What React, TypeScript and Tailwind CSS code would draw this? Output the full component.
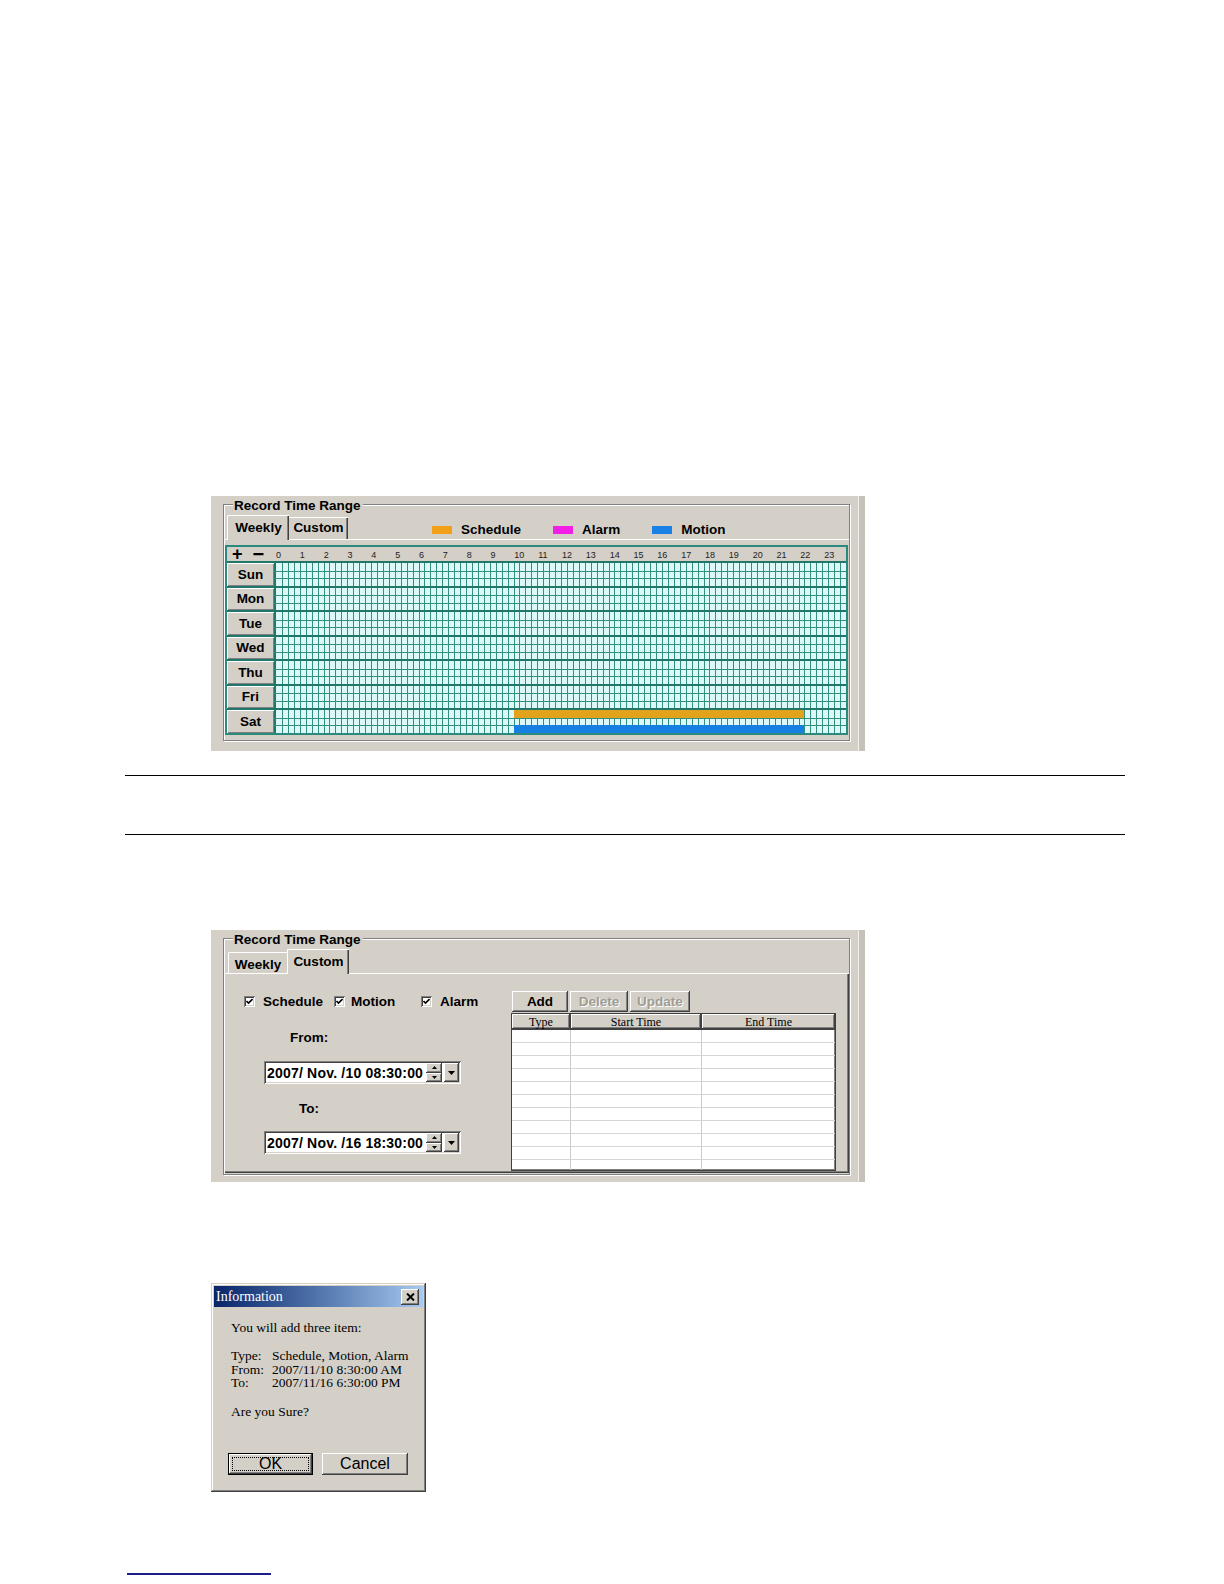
import React from 'react';

const ui = "font-['Liberation_Sans',Arial,sans-serif]";
const serif = "font-['Liberation_Serif','Times_New_Roman',serif]";
const raised = 'shadow-[inset_-1px_-1px_0_#404040,inset_1px_1px_0_#ffffff,inset_-2px_-2px_0_#808080]';
const sunken =
  'shadow-[inset_1px_1px_0_#808080,inset_-1px_-1px_0_#ffffff,inset_2px_2px_0_#404040,inset_-2px_-2px_0_#d4d0c8]';

const DAYS = ['Sun', 'Mon', 'Tue', 'Wed', 'Thu', 'Fri', 'Sat'];
const HOURS = Array.from({ length: 24 }, (_, i) => i);

// Sat row: schedule + motion from 10:00 to 22:15 (15 min cells)
const BARS = [
  { day: 6, sub: 0, from: 40, to: 89, color: '#e2a21c' },
  { day: 6, sub: 2, from: 40, to: 89, color: '#1580e2' },
];

function GroupBox({ children }: { children: React.ReactNode }) {
  return (
    <div className="relative w-[627px] h-[237px] border border-[#808080] shadow-[inset_1px_1px_0_#ffffff,1px_1px_0_#ffffff]">
      <span className="absolute left-[9px] top-[-7px] bg-[#d4d0c8] pl-px pr-[2px] text-[13.5px] font-bold leading-[15px]">
        Record Time Range
      </span>
      {children}
    </div>
  );
}

function Cells() {
  const W = 572;
  const H = 172;
  const rowH = H / 7;
  const subH = (rowH - 2) / 3;
  const cw = (W - 2) / 96;
  const parts: React.ReactNode[] = [];

  for (let i = 1; i < 96; i++) {
    const x = Math.round(2 + i * cw);
    parts.push(<rect key={'v' + i} x={x} y={0} width={1} height={H} fill="#33907f" />);
  }
  for (let d = 0; d < 7; d++) {
    const top = d * rowH;
    parts.push(<rect key={'d' + d} x={0} y={Math.round(top)} width={W} height={2} fill="#21766a" />);
    for (let k = 1; k < 3; k++) {
      parts.push(
        <rect key={'h' + d + k} x={0} y={Math.round(top + 2 + k * subH)} width={W} height={1} fill="#33907f" />,
      );
    }
  }
  BARS.forEach((b, i) => {
    const top = b.day * rowH + 2 + b.sub * subH;
    parts.push(
      <rect key={'b' + i} x={2 + b.from * cw} y={top} width={(b.to - b.from) * cw} height={subH + 0.5} fill={b.color} />,
    );
  });

  return (
    <svg width={W} height={H} shapeRendering="crispEdges" className="block">
      <rect x={0} y={0} width={W} height={H} fill="#dcf9f7" />
      <rect x={0} y={0} width={2} height={H} fill="#21766a" />
      {parts}
    </svg>
  );
}

function WeekGrid() {
  return (
    <div className="ml-[1px] mt-[5px] w-[623px] h-[190px] border-2 border-[#2a8a7e] flex flex-col">
      <div className="flex h-[14px] bg-[#d4d0c8]">
        <div className="w-[47px] flex items-center pl-[5px] font-bold leading-none">
          <span className="text-[18px]">+</span>
          <span className="ml-[10px] text-[20px]">−</span>
        </div>
        <div className="flex-1 grid grid-cols-[repeat(24,minmax(0,1fr))] items-end pb-[1px]">
          {HOURS.map((h) => (
            <span key={h} className="pl-[2px] text-[9px] leading-none text-[#222]">
              {h}
            </span>
          ))}
        </div>
      </div>
      <div className="flex h-[172px]">
        <div className="w-[47px] flex flex-col">
          {DAYS.map((d) => (
            <div
              key={d}
              className="flex-1 border-t-2 border-[#21766a] bg-[#d4d0c8] shadow-[inset_1px_1px_0_#ffffff,inset_-1px_-1px_0_#808080] flex items-center justify-center text-[13.5px] font-bold leading-none"
            >
              {d}
            </div>
          ))}
        </div>
        <Cells />
      </div>
    </div>
  );
}

function Legend() {
  const items = [
    { label: 'Schedule', color: 'bg-[#f2a01a]' },
    { label: 'Alarm', color: 'bg-[#f21ee6]' },
    { label: 'Motion', color: 'bg-[#1a80e6]' },
  ];
  return (
    <div className="self-start mt-[19px] ml-[84px] flex items-center gap-[32px]">
      {items.map((it) => (
        <div key={it.label} className="flex items-center gap-[9px]">
          <span className={`w-[20px] h-[8px] ${it.color}`} />
          <span className="text-[13.5px] font-bold leading-[12px]">{it.label}</span>
        </div>
      ))}
    </div>
  );
}

function WeeklyShot() {
  return (
    <div className="ml-[211px] w-[654px] h-[255px] bg-[#d4d0c8] pl-[12px] pt-[8px] shadow-[inset_-6px_0_0_#c6c2ba,inset_-7px_0_0_#f2f0ec]">
      <GroupBox>
        <div className="flex items-end h-[35px] pl-[3px] border-b border-white">
          <div className="mb-[-1px] h-[25px] w-[62px] bg-[#d4d0c8] border-l border-t border-white rounded-tl-[2px] shadow-[inset_-1px_0_0_#404040,inset_-2px_0_0_#808080] flex justify-center pt-[4px] text-[13.5px] font-bold leading-[15px]">
            Weekly
          </div>
          <div className="h-[22px] w-[59px] border-t border-white shadow-[inset_-1px_0_0_#404040,inset_-2px_0_0_#808080] flex justify-center pt-[2px] text-[13.5px] font-bold leading-[15px]">
            Custom
          </div>
          <Legend />
        </div>
        <WeekGrid />
      </GroupBox>
    </div>
  );
}

function Check() {
  return (
    <span className={`w-[11px] h-[11px] bg-white ${sunken} flex items-center justify-center`}>
      <svg width="7" height="7" viewBox="0 0 7 7">
        <path d="M0.5 3 L2.5 5 L6.5 1" stroke="#000" strokeWidth="1.6" fill="none" />
      </svg>
    </span>
  );
}

function DateField({ value, className }: { value: string; className: string }) {
  return (
    <div className={`ml-[39px] w-[197px] h-[23px] bg-white ${sunken} flex items-center pl-[3px] ${className}`}>
      <span className="w-[157px] text-[14px] font-bold leading-none tracking-[0.2px] whitespace-nowrap">{value}</span>
      <div className="ml-[2px] w-[16px] h-[19px] flex flex-col">
        <div className={`flex-1 bg-[#d4d0c8] ${raised} flex items-center justify-center`}>
          <svg width="5" height="3">
            <path d="M0 3 L2.5 0 L5 3Z" fill="#000" />
          </svg>
        </div>
        <div className={`flex-1 bg-[#d4d0c8] ${raised} flex items-center justify-center`}>
          <svg width="5" height="3">
            <path d="M0 0 L2.5 3 L5 0Z" fill="#000" />
          </svg>
        </div>
      </div>
      <div className={`ml-[2px] w-[15px] h-[19px] bg-[#d4d0c8] ${raised} flex items-center justify-center`}>
        <svg width="7" height="4">
          <path d="M0 0 L3.5 4 L7 0Z" fill="#000" />
        </svg>
      </div>
    </div>
  );
}

function RecordTable() {
  const rows = Array.from({ length: 11 }, (_, i) => i);
  return (
    <div className="mt-px w-[325px] h-[158px] bg-white border border-[#404040] shadow-[inset_-1px_-1px_0_#808080] overflow-hidden">
      <div className={`flex h-[16px] border-b border-[#404040] text-[12px] leading-none ${serif}`}>
        <div className={`w-[59px] bg-[#d4d0c8] ${raised} border-r border-[#404040] flex items-center justify-center`}>
          Type
        </div>
        <div className={`w-[131px] bg-[#d4d0c8] ${raised} border-r border-[#404040] flex items-center justify-center`}>
          Start Time
        </div>
        <div className={`flex-1 bg-[#d4d0c8] ${raised} flex items-center justify-center`}>End Time</div>
      </div>
      {rows.map((r) => (
        <div key={r} className="flex h-[13px] border-b border-[#d6d6d6]">
          <div className="w-[59px] border-r border-[#cccccc]" />
          <div className="w-[131px] border-r border-[#cccccc]" />
          <div className="flex-1" />
        </div>
      ))}
    </div>
  );
}

function CustomShot() {
  return (
    <div className="ml-[211px] mt-[95px] w-[654px] h-[252px] bg-[#d4d0c8] pl-[12px] pt-[8px] shadow-[inset_-6px_0_0_#c6c2ba,inset_-7px_0_0_#f2f0ec]">
      <GroupBox>
        <div className="flex items-end h-[35px] pl-[4px] border-b border-white">
          <div className="h-[21px] w-[59px] border-l border-t border-white rounded-tl-[2px] flex justify-center pt-[4px] text-[13.5px] font-bold leading-[15px]">
            Weekly
          </div>
          <div className="mb-[-1px] h-[25px] w-[62px] bg-[#d4d0c8] border-l border-t border-white shadow-[inset_-1px_0_0_#404040,inset_-2px_0_0_#808080] flex justify-center pt-[4px] text-[13.5px] font-bold leading-[15px]">
            Custom
          </div>
        </div>
        <div className="h-[199px] border-l border-white shadow-[inset_-1px_-1px_0_#404040,inset_-2px_-2px_0_#808080] flex">
          <div className="w-[286px] flex flex-col">
            <div className="mt-[21px] h-[13px] flex items-center pl-[19px] text-[13.5px] font-bold leading-none">
              <div className="w-[90px] flex items-center gap-[8px]">
                <Check />
                <span>Schedule</span>
              </div>
              <div className="w-[87px] flex items-center gap-[6px]">
                <Check />
                <span>Motion</span>
              </div>
              <div className="flex items-center gap-[8px]">
                <Check />
                <span>Alarm</span>
              </div>
            </div>
            <div className="mt-[23px] pl-[65px] text-[13.5px] font-bold leading-[14px]">From:</div>
            <DateField value="2007/ Nov. /10 08:30:00" className="mt-[16px]" />
            <div className="mt-[18px] pl-[74px] text-[13.5px] font-bold leading-[14px]">To:</div>
            <DateField value="2007/ Nov. /16 18:30:00" className="mt-[15px]" />
          </div>
          <div className="pt-[17px]">
            <div className="ml-px flex h-[21px] gap-[2px] text-[13.5px] font-bold leading-none">
              <div className={`w-[56px] bg-[#d4d0c8] ${raised} flex items-center justify-center`}>Add</div>
              <div
                className={`w-[58px] bg-[#d4d0c8] ${raised} flex items-center justify-center text-[#a09c94] [text-shadow:1px_1px_0_#ffffff]`}
              >
                Delete
              </div>
              <div
                className={`w-[60px] bg-[#d4d0c8] ${raised} flex items-center justify-center text-[#a09c94] [text-shadow:1px_1px_0_#ffffff]`}
              >
                Update
              </div>
            </div>
            <RecordTable />
          </div>
        </div>
      </GroupBox>
    </div>
  );
}

function InfoDialog() {
  return (
    <div
      className={`ml-[211px] mt-[101px] w-[215px] h-[209px] bg-[#d4d0c8] p-[3px] shadow-[inset_-1px_-1px_0_#404040,inset_1px_1px_0_#d4d0c8,inset_-2px_-2px_0_#808080,inset_2px_2px_0_#ffffff] ${serif}`}
    >
      <div className="h-[21px] flex items-center justify-between bg-linear-to-r from-[#0a246a] to-[#a6caf0] pl-[2px] pr-[4px]">
        <span className="text-white text-[14px] leading-none">Information</span>
        <div className={`w-[18px] h-[16px] bg-[#d4d0c8] ${raised} flex items-center justify-center`}>
          <svg width="9" height="8" viewBox="0 0 9 8">
            <path d="M1 0.5 L8 7.5 M8 0.5 L1 7.5" stroke="#000" strokeWidth="2" />
          </svg>
        </div>
      </div>
      <div className="pl-[17px] text-[13.5px] leading-[14px] text-black">
        <div className="mt-[14px]">You will add three item:</div>
        <div className="mt-[14px] grid grid-cols-[41px_1fr] leading-[13.7px]">
          <span>Type:</span>
          <span>Schedule, Motion, Alarm</span>
          <span>From:</span>
          <span>2007/11/10 8:30:00 AM</span>
          <span>To:</span>
          <span>2007/11/16 6:30:00 PM</span>
        </div>
        <div className="mt-[15px]">Are you Sure?</div>
      </div>
      <div className={`mt-[34px] ml-[14px] flex gap-[9px] text-[16px] leading-none ${ui}`}>
        <div className="w-[85px] h-[22px] border border-black">
          <div className={`h-full bg-[#d4d0c8] ${raised} p-[3px]`}>
            <div className="h-full border border-dotted border-black flex items-center justify-center">OK</div>
          </div>
        </div>
        <div className={`w-[86px] h-[22px] bg-[#d4d0c8] ${raised} flex items-center justify-center`}>Cancel</div>
      </div>
    </div>
  );
}

export default function App() {
  return (
    <div className={`w-[1224px] h-[1584px] bg-white overflow-hidden pt-[496px] text-black ${ui}`}>
      <WeeklyShot />
      <div className="ml-[125px] mt-[24px] w-[1000px] h-px bg-black" />
      <div className="ml-[125px] mt-[58px] w-[1000px] h-px bg-black" />
      <CustomShot />
      <InfoDialog />
      <div className="ml-[127px] mt-[81px] w-[144px] h-[2px] bg-[#1c1c8a]" />
    </div>
  );
}
